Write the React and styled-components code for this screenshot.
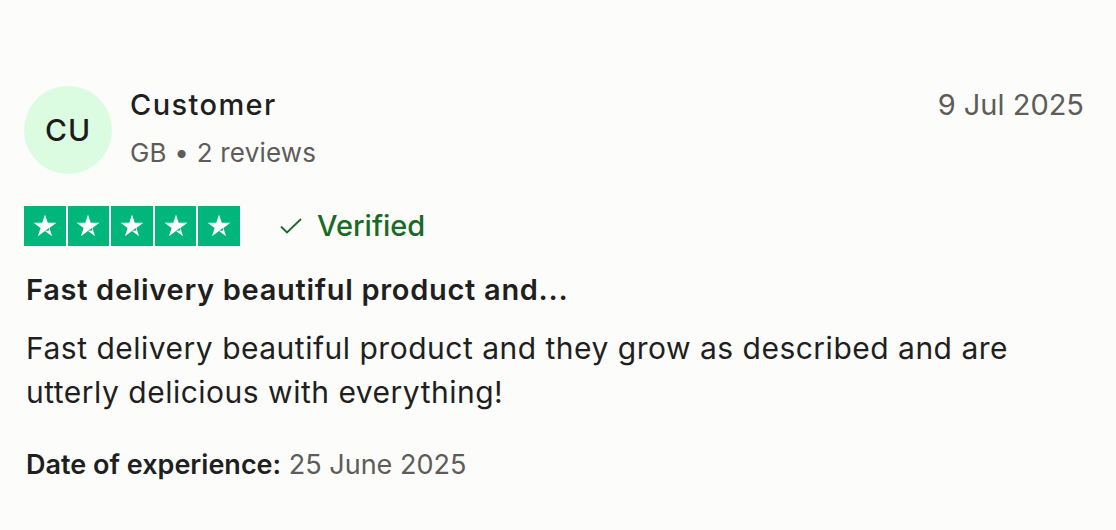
import React from "react";
import styled, { createGlobalStyle } from "styled-components";

const Global = createGlobalStyle`
  html, body {
    margin: 0;
    background: #fcfcfb;
  }
  body {
    font-family: Inter, "Liberation Sans", sans-serif;
    color: #1f1f1f;
  }
`;

const Card = styled.article`
  padding: 86px 32px 0 24px;
  width: 1116px;
  height: 530px;
  box-sizing: border-box;
`;

const Header = styled.header`
  display: flex;
  align-items: flex-start;
  gap: 18px;
`;

const Avatar = styled.div`
  width: 88px;
  height: 88px;
  border-radius: 50%;
  background: #dcfce2;
  display: flex;
  align-items: center;
  justify-content: center;
  font-size: 30px;
  font-weight: 500;
  letter-spacing: 1px;
  color: #1c1c1c;
  flex-shrink: 0;
`;

const Who = styled.div`
  flex: 1;
  display: flex;
  flex-direction: column;
  gap: 15px;
  padding-top: 2px;
`;

const Name = styled.div`
  font-size: 29px;
  font-weight: 500;
  letter-spacing: 1.4px;
  line-height: 34px;
`;

const Meta = styled.div`
  font-size: 26px;
  letter-spacing: 0.2px;
  line-height: 32px;
  color: #5e5c59;
`;

const Posted = styled.time`
  font-size: 29px;
  line-height: 34px;
  color: #5e5c59;
  padding-top: 2px;
`;

const RatingRow = styled.div`
  display: flex;
  align-items: center;
  gap: 39px;
  margin-top: 32px;
`;

const Stars = styled.div`
  display: flex;
  gap: 2px;
`;

const StarBox = styled.span`
  width: 41.6px;
  height: 40px;
  background: #00b67a;
  display: flex;
  align-items: center;
  justify-content: center;
`;

const Verified = styled.div`
  display: flex;
  align-items: center;
  gap: 14px;
  color: #1a6a27;
  font-size: 29px;
  font-weight: 500;
  line-height: 34px;
`;

const Title = styled.h2`
  margin: 26px 0 0 2px;
  font-size: 29px;
  font-weight: 600;
  letter-spacing: 0.7px;
  line-height: 36px;
`;

const Body = styled.p`
  margin: 19px 0 0 2px;
  font-size: 30px;
  letter-spacing: 0.5px;
  line-height: 43.5px;
  max-width: 1010px;
`;

const Experience = styled.p`
  margin: 35px 0 0 2px;
  font-size: 27px;
  line-height: 32px;
  color: #5e5c59;
  b {
    font-weight: 600;
    color: #1f1f1f;
  }
`;

const Star = () => (
  <svg width="28" height="28" viewBox="0 0 24 24">
    <path
      d="M12 2.2l2.35 7.05H21.8l-6.03 4.38 2.3 7.1L12 16.35 5.93 20.73l2.3-7.1L2.2 9.25h7.45z"
      fill="#fff"
    />
    <path d="M15.2 13.8l.6 2.1L12 16.35z" fill="#00b67a" />
  </svg>
);

const Check = () => (
  <svg width="24" height="18" viewBox="0 0 24 18">
    <path d="M2 9.5l6 6L22 2" fill="none" stroke="#1a6a27" strokeWidth="1.8" />
  </svg>
);

export default function App() {
  return (
    <>
      <Global />
      <Card>
        <Header>
          <Avatar>CU</Avatar>
          <Who>
            <Name>Customer</Name>
            <Meta>GB • 2 reviews</Meta>
          </Who>
          <Posted>9 Jul 2025</Posted>
        </Header>
        <RatingRow>
          <Stars>
            {[0, 1, 2, 3, 4].map((i) => (
              <StarBox key={i}>
                <Star />
              </StarBox>
            ))}
          </Stars>
          <Verified>
            <Check />
            Verified
          </Verified>
        </RatingRow>
        <Title>Fast delivery beautiful product and...</Title>
        <Body>
          Fast delivery beautiful product and they grow as described and are
          utterly delicious with everything!
        </Body>
        <Experience>
          <b>Date of experience:</b> 25 June 2025
        </Experience>
      </Card>
    </>
  );
}
